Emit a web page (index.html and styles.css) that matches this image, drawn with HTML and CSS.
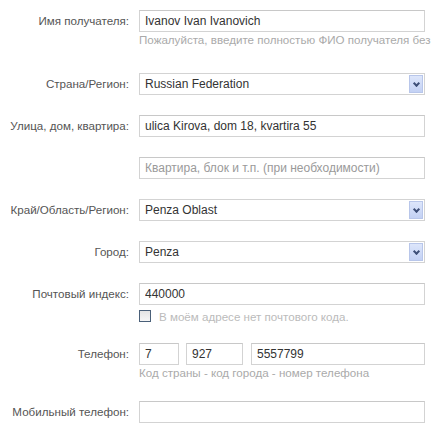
FILE: index.html
```html
<!DOCTYPE html>
<html lang="ru">
<head>
  <meta charset="UTF-8" />
  <meta name="viewport" content="width=device-width, initial-scale=1.0" />
  <title>Адрес доставки</title>
  <link rel="stylesheet" href="styles.css">
</head>
<body>
  <form class="address-form">
    <div class="row">
      <label class="label">Имя получателя:</label>
      <div class="field">
        <input type="text" class="input" value="Ivanov Ivan Ivanovich">
        <div class="hint hint-name">Пожалуйста, введите полностью ФИО получателя без</div>
      </div>
    </div>

    <div class="row">
      <label class="label">Страна/Регион:</label>
      <div class="field">
        <div class="select"><span>Russian Federation</span><i class="arrow"></i></div>
      </div>
    </div>

    <div class="row">
      <label class="label">Улица, дом, квартира:</label>
      <div class="field">
        <input type="text" class="input" value="ulica Kirova, dom 18, kvartira 55">
      </div>
    </div>

    <div class="row">
      <label class="label"></label>
      <div class="field">
        <input type="text" class="input" placeholder="Квартира, блок и т.п. (при необходимости)">
      </div>
    </div>

    <div class="row">
      <label class="label">Край/Область/Регион:</label>
      <div class="field">
        <div class="select"><span>Penza Oblast</span><i class="arrow"></i></div>
      </div>
    </div>

    <div class="row">
      <label class="label">Город:</label>
      <div class="field">
        <div class="select"><span>Penza</span><i class="arrow"></i></div>
      </div>
    </div>

    <div class="row">
      <label class="label">Почтовый индекс:</label>
      <div class="field">
        <input type="text" class="input" value="440000">
        <div class="check">
          <span class="box"></span>
          <span>В моём адресе нет почтового кода.</span>
        </div>
      </div>
    </div>

    <div class="row">
      <label class="label">Телефон:</label>
      <div class="field">
        <div class="phone">
          <input type="text" class="input code" value="7">
          <input type="text" class="input city" value="927">
          <input type="text" class="input number" value="5557799">
        </div>
        <div class="hint">Код страны - код города - номер телефона</div>
      </div>
    </div>

    <div class="row">
      <label class="label">Мобильный телефон:</label>
      <div class="field">
        <input type="text" class="input" value="">
      </div>
    </div>
  </form>
</body>
</html>
```

FILE: styles.css
```css
body {
  margin: 0;
  background: #fff;
  font-family: 'Liberation Sans', Arial, sans-serif;
  font-size: 12px;
  color: #333;
  overflow: hidden;
}

.address-form {
  padding-top: 10px;
}

.row {
  display: flex;
  align-items: flex-start;
  margin-bottom: 20px;
}

.label {
  width: 139px;
  flex-shrink: 0;
  padding-right: 10px;
  box-sizing: border-box;
  text-align: right;
  white-space: nowrap;
  line-height: 22px;
  font-size: 11.6px;
  color: #555;
}

.field {
  width: 286px;
  flex-shrink: 0;
}

.input {
  display: block;
  width: 100%;
  height: 22px;
  box-sizing: border-box;
  margin: 0;
  padding: 0 5px;
  border: 1px solid #d3d3d3;
  border-top-color: #c8c8c8;
  background: #fff;
  font-family: inherit;
  font-size: 12px;
  color: #333;
  outline: none;
}

.input::placeholder {
  color: #9a9a9a;
}

.hint {
  line-height: 16px;
  font-size: 11.6px;
  color: #aaa;
  white-space: nowrap;
}

.hint-name {
  margin-bottom: 5px;
}

/* select box with a blue drop button */
.select {
  display: flex;
  align-items: center;
  justify-content: space-between;
  height: 22px;
  box-sizing: border-box;
  padding: 0 1px 0 5px;
  border: 1px solid #d3d3d3;
  background: #fff;
}

.arrow {
  position: relative;
  width: 14px;
  height: 18px;
  box-sizing: border-box;
  border: 1px solid #b8c6ea;
  background: linear-gradient(#dde6fb, #c3d1f4);
}

.arrow::after {
  content: '';
  position: absolute;
  left: 4px;
  top: 5px;
  width: 3px;
  height: 3px;
  border-right: 2px solid #3e4f78;
  border-bottom: 2px solid #3e4f78;
  transform: rotate(45deg);
}

.check {
  display: flex;
  align-items: center;
  gap: 8px;
  height: 14px;
  margin-top: 4px;
  font-size: 11.6px;
  color: #bbb;
}

.box {
  width: 12px;
  height: 12px;
  box-sizing: border-box;
  border: 1px solid #4a6079;
  background: linear-gradient(#e4e4e4, #f6f6f6);
}

.phone {
  display: flex;
}

.phone .code {
  width: 40px;
  margin-right: 7px;
}

.phone .city {
  width: 57px;
  margin-right: 8px;
}

.phone .number {
  flex: 1;
}
```
